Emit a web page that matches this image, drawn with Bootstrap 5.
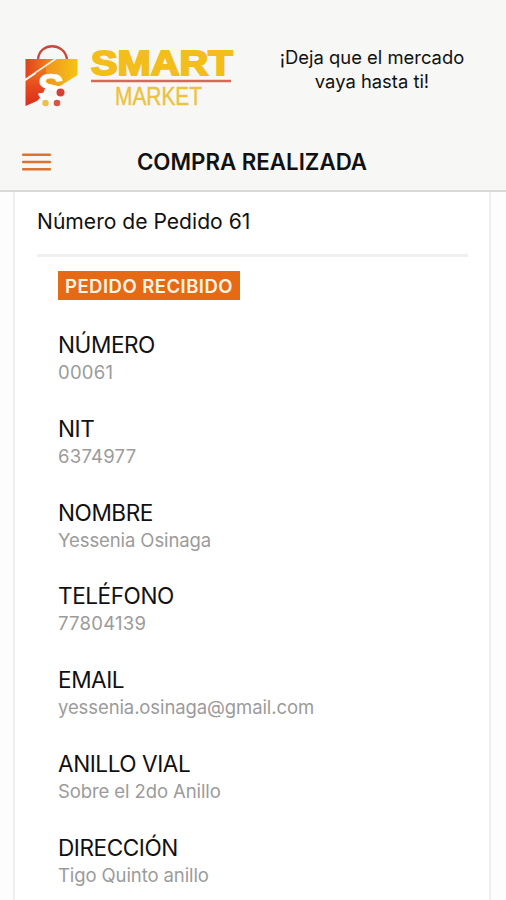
<!DOCTYPE html>
<html lang="es">
<head>
<meta charset="utf-8">
<meta name="viewport" content="width=device-width, initial-scale=1">
<title>Compra realizada</title>
<link rel="stylesheet" href="https://cdn.jsdelivr.net/npm/bootstrap@5.3.0/dist/css/bootstrap.min.css">
<style>
  body { font-family: Inter, "Liberation Sans", sans-serif; color: #111; height: 900px; background: #fdfdfd; }
  .app-header { height: 192px; background: #f7f7f6; border-bottom: 2px solid #d9d9d8; }
  .brand-row { height: 132px; padding: 33px 34px 0 16px; }
  .slogan { width: 200px; font-size: 18.4px; line-height: 24px; padding-top: 12px; }
  .title-row { height: 59px; padding: 0 22px; }
  .menu-btn { width: 29px; }
  .page-title { font-size: 22.3px; font-weight: 600; line-height: 28px; padding-right: 31px; }
  .order-card { margin: 0 15px 0 13px; height: 708px; border: solid #efefef; border-width: 0 2px; background: #fff; padding: 0 21px 0 22px; }
  .order-title { height: 65px; padding-top: 16px; font-size: 21.1px; line-height: 28px; border-bottom: 3px solid #efefef; }
  .order-body { padding: 14px 0 0 21px; }
  .status-tag { width: 182px; height: 29px; padding-top: 2px; background: #e66a15; color: #fff5e6; font-size: 18.5px; font-weight: 600; letter-spacing: .48px; }
  .fields { padding-top: 23px; }
  .field { height: 83.8px; }
  .field dt { font-size: 22.6px; line-height: 28px; font-weight: 400; letter-spacing: -.45px; }
  .field dd { font-size: 18.5px; line-height: 26px; color: #9b9b9b; letter-spacing: -.1px; }
  .field .digits { letter-spacing: .25px; }
</style>
</head>
<body class="overflow-hidden">
<header class="app-header">
  <div class="brand-row d-flex justify-content-between align-items-start">
    <svg width="224" height="82" viewBox="16 33 224 82" role="img" aria-label="Smart Market">
      <defs>
        <linearGradient id="red" x1="0" y1="0" x2="0" y2="1"><stop offset="0" stop-color="#ef7a1c"/><stop offset=".5" stop-color="#e64a1c"/><stop offset="1" stop-color="#dc2d1e"/></linearGradient>
        <linearGradient id="redtop" x1="0" y1="0" x2="1" y2="0"><stop offset="0" stop-color="#e2401c"/><stop offset="1" stop-color="#f0921e"/></linearGradient>
        <linearGradient id="gold" x1="0" y1="0" x2="1" y2="0"><stop offset="0" stop-color="#ef8420"/><stop offset="1" stop-color="#f5c414"/></linearGradient>
      </defs>
      <path d="M38 59C40 42 64 42 67 59" fill="none" stroke="#c64a3c" stroke-width="2.300"/>
      <path d="M25.500 59H54L25.500 78.500Z" fill="url(#redtop)"/>
      <path d="M57 59H77.500V75L60 86H36V73Z" fill="url(#gold)"/>
      <path d="M25.500 81L46 67V86L42 96L37 101L25.500 106Z" fill="url(#red)"/>
      <text x="37.500" y="101" textLength="27" lengthAdjust="spacingAndGlyphs" font-family="Liberation Sans" font-weight="700" font-size="38" fill="#fff" stroke="#fff" stroke-width=".6">S</text>
      <circle cx="60.500" cy="92.500" r="4" fill="#d54235"/><circle cx="45.500" cy="103" r="3.200" fill="#edc04a"/><circle cx="57" cy="103" r="3.300" fill="#d95545"/>
      <text x="91" y="74.500" textLength="141.500" lengthAdjust="spacingAndGlyphs" font-family="Liberation Sans" font-weight="700" font-size="34.500" fill="#f3bd1b" stroke="#f3bd1b" stroke-width="2">SMART</text>
      <path d="M91 81H231" stroke="#d66a56" stroke-width="2.500"/>
      <text x="115" y="105" textLength="87" lengthAdjust="spacingAndGlyphs" font-family="Liberation Sans" font-size="25" fill="#ecc23f" stroke="#ecc23f" stroke-width=".4">MARKET</text>
    </svg>
    <div class="slogan text-center">¡Deja que el mercado vaya hasta ti!</div>
  </div>
  <div class="title-row d-flex align-items-center">
    <button class="menu-btn btn border-0 p-0 d-flex" type="button" aria-label="Menú">
      <svg width="29" height="18" viewBox="0 0 29 18"><path d="M1 1.700H28M1 9H28M1 16.300H28" stroke="#dc7330" stroke-width="2.400" stroke-linecap="round"/></svg>
    </button>
    <h1 class="page-title flex-grow-1 text-center m-0">COMPRA REALIZADA</h1>
  </div>
</header>
<main class="order-card">
  <h2 class="order-title fw-normal m-0">Número de Pedido 61</h2>
  <div class="order-body">
    <div class="status-tag d-flex align-items-center justify-content-center">PEDIDO RECIBIDO</div>
    <dl class="fields m-0">
      <div class="field pt-2"><dt>NÚMERO</dt><dd class="digits m-0">00061</dd></div>
      <div class="field pt-2"><dt>NIT</dt><dd class="digits m-0">6374977</dd></div>
      <div class="field pt-2"><dt>NOMBRE</dt><dd class="m-0">Yessenia Osinaga</dd></div>
      <div class="field pt-2"><dt>TELÉFONO</dt><dd class="digits m-0">77804139</dd></div>
      <div class="field pt-2"><dt>EMAIL</dt><dd class="m-0">yessenia.osinaga@gmail.com</dd></div>
      <div class="field pt-2"><dt>ANILLO VIAL</dt><dd class="m-0">Sobre el 2do Anillo</dd></div>
      <div class="field pt-2"><dt>DIRECCIÓN</dt><dd class="m-0">Tigo Quinto anillo</dd></div>
    </dl>
  </div>
</main>
<script src="https://cdn.jsdelivr.net/npm/bootstrap@5.3.0/dist/js/bootstrap.bundle.min.js"></script>
</body>
</html>
